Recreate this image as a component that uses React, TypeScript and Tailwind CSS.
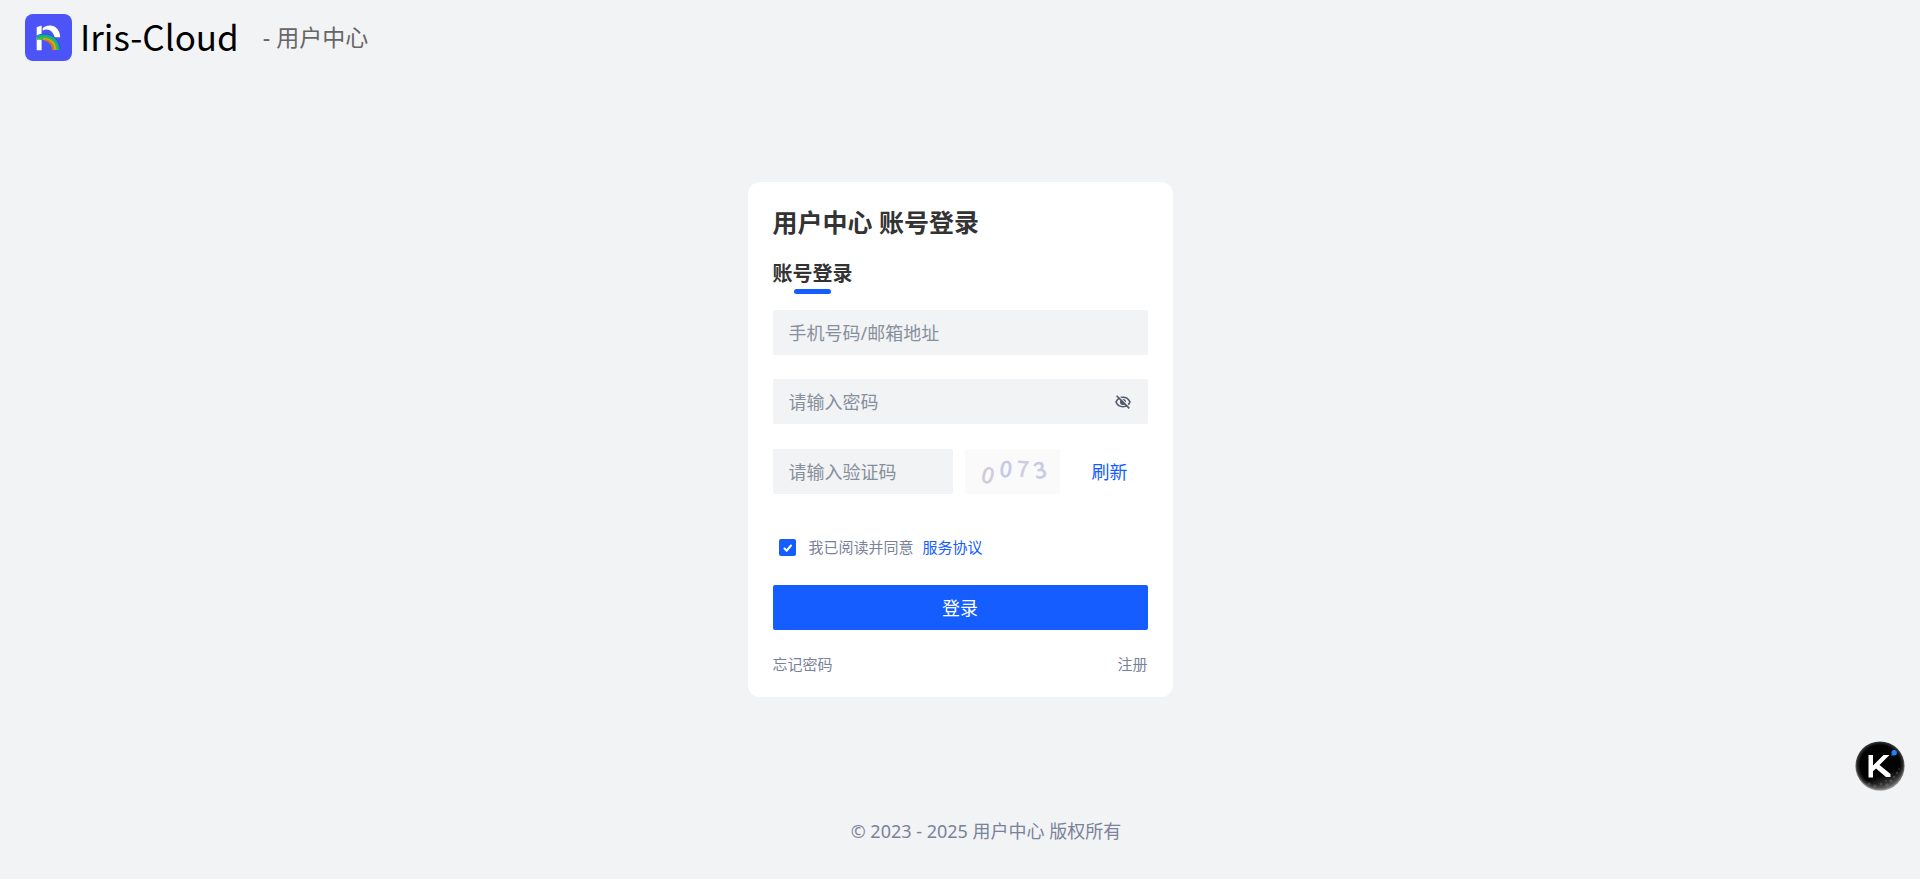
import { useState } from 'react';

function Logo() {
  return (
    <svg viewBox="0 0 47 47" className="size-[47px]" aria-hidden="true">
      <rect width="47" height="47" rx="8" fill="#4c54f7" />
      <path d="M11.7 13.2 L16.6 11.4 V36.2 H11.7 Z" fill="#fff" />
      <path d="M17.6 14.2 C20 12 23 11.3 26 11.6 C31 12.2 35 16.5 35.2 23.2 H29.6 C28.5 18.5 25.5 15.8 21.5 15.6 C20 15.6 18.8 16 17.6 16.6 Z" fill="#fff" />
      <path d="M11.6 22.6 C21 17.5 34 22 34.6 36 H27.2 C26.5 29 21.5 25 11.6 26 Z" fill="#43b05a" />
      <path d="M11.6 23.2 C21 18.5 33.2 23 33.8 36" fill="none" stroke="#12a7ae" strokeWidth="1.8" />
      <path d="M14.5 24.6 C22 22 31.3 26 32 36" fill="none" stroke="#3fbd3a" strokeWidth="1.8" />
      <path d="M18.5 25 C25.5 25.3 29.9 29 30.4 36" fill="none" stroke="#e0a51c" strokeWidth="1.8" />
      <path d="M20.5 26 C25.5 27.5 28 31 28.4 36" fill="none" stroke="#ee6a1c" strokeWidth="1.7" />
      <path d="M10.8 22.4 C21 16.5 34.5 21.5 35.4 36" fill="none" stroke="#1765c8" strokeWidth="1" />
    </svg>
  );
}

function HiddenEye() {
  return (
    <svg viewBox="0 0 16 16" className="size-4" fill="none" aria-hidden="true">
      <path d="M1 8 C3.8 1.7 12.2 1.7 15 8 C12.2 14.3 3.8 14.3 1 8 Z" stroke="#4e5969" strokeWidth="1.6" />
      <circle cx="8" cy="8" r="3" fill="#4e5969" />
      <path d="M2.6 1.1 L15 13.5" stroke="#f2f3f5" strokeWidth="1.2" />
      <path d="M1.6 1.7 L14.3 14.4" stroke="#4e5969" strokeWidth="1.6" />
    </svg>
  );
}

function Captcha() {
  return (
    <svg viewBox="0 0 95 45" className="h-[45px] w-[95px] shrink-0 bg-[#fafafa]" role="img" aria-label="验证码">
      <g fontFamily="'Noto Sans CJK SC', sans-serif" fontSize="22" fontWeight="400" textAnchor="middle" strokeWidth="0.6">
        <text transform="translate(23 26) rotate(15)" y="8" fill="#d0cbd9" stroke="#d0cbd9">0</text>
        <text transform="translate(41 20) rotate(8)" y="8" fill="#c3c8e6" stroke="#c3c8e6">0</text>
        <text transform="translate(58 20) rotate(4)" y="8" fill="#d0cbe4" stroke="#d0cbe4">7</text>
        <text transform="translate(75 21) rotate(-14)" y="8" fill="#c3cbe2" stroke="#c3cbe2">3</text>
      </g>
    </svg>
  );
}

function Assistant() {
  return (
    <button type="button" aria-label="助手" className="fixed right-[15px] bottom-[88px] size-[50px] cursor-pointer">
      <svg viewBox="0 0 50 50" className="size-full" aria-hidden="true">
        <defs>
          <radialGradient id="orb" cx="50%" cy="48%" r="52%">
            <stop offset="0.78" stopColor="#030303" />
            <stop offset="0.9" stopColor="#2e2e2e" />
            <stop offset="1" stopColor="#a0a0a0" />
          </radialGradient>
          <linearGradient id="dust" x1="0.35" y1="0.2" x2="0.65" y2="1">
            <stop offset="0.6" stopColor="#888" stopOpacity="0" />
            <stop offset="1" stopColor="#999" stopOpacity="0.6" />
          </linearGradient>
        </defs>
        <circle cx="25" cy="25" r="24.6" fill="url(#orb)" />
        <circle cx="25" cy="25" r="24.6" fill="url(#dust)" />
        <g fill="#a5a5a5" opacity="0.25">
          <circle cx="39" cy="36" r="1.3" />
          <circle cx="36" cy="40" r="1.8" />
          <circle cx="42" cy="32" r="1.2" />
          <circle cx="32" cy="44" r="1.8" />
          <circle cx="26" cy="43" r="1.4" />
          <circle cx="20" cy="45" r="1.6" />
          <circle cx="14" cy="43" r="1.4" />
          <circle cx="44" cy="28" r="0.9" />
          <circle cx="31" cy="40" r="0.9" />
        </g>
        <path d="M13.5 14 H18 V24.5 L28.5 14 H34.5 L24.5 24 L35.5 33 V36 H31 L21 27.5 L18 30.3 V36.5 H13.5 Z" fill="#fff" />
        <path d="M36.5 14.5 V12 A2.7 2.7 0 1 1 39.2 14.5 Z" fill="#1d82f5" />
      </svg>
    </button>
  );
}

const field =
  'h-[45px] rounded-xs bg-[#f2f3f5] px-4 text-lg text-[#1d2129] outline-none placeholder:text-[#86909c]';

export default function App() {
  const [agreed, setAgreed] = useState(true);
  const [visible, setVisible] = useState(false);

  return (
    <div className="flex min-h-screen flex-col bg-[#f2f3f5] font-['Noto_Sans','Noto_Sans_CJK_SC',sans-serif]">
      <header className="flex h-[76px] items-center pb-px pl-[25px]">
        <Logo />
        <span className="ml-2 pb-1 font-['Noto_Sans_CJK_SC',sans-serif] text-[35px] leading-none text-black">
          Iris-Cloud
        </span>
        <span className="ml-6 text-[23px] text-[#666]">- 用户中心</span>
      </header>

      <main className="flex flex-1 items-center justify-center">
        <form
          className="flex w-[425px] flex-col rounded-xl bg-white px-[25px] pt-[25px] pb-[21px]"
          onSubmit={(e) => e.preventDefault()}
        >
          <h1 className="text-[25px] leading-[30px] font-bold text-[#333]">用户中心 账号登录</h1>
          <h2 className="mt-[22px] text-xl leading-[30px] font-bold text-[#333]">账号登录</h2>
          <div className="ml-[21px] h-[5px] w-[37px] rounded-full bg-[#165dff]" />

          <input className={`mt-4 ${field}`} type="text" aria-label="手机号码/邮箱地址" placeholder="手机号码/邮箱地址" />

          <div className="mt-6 flex items-center rounded-xs bg-[#f2f3f5] pr-[17px]">
            <input
              className={`min-w-0 flex-1 ${field}`}
              type={visible ? 'text' : 'password'}
              aria-label="请输入密码"
              placeholder="请输入密码"
            />
            <button type="button" aria-label="显示密码" className="cursor-pointer" onClick={() => setVisible(!visible)}>
              <HiddenEye />
            </button>
          </div>

          <div className="mt-[25px] flex">
            <input className={`w-[180px] ${field}`} type="text" aria-label="请输入验证码" placeholder="请输入验证码" />
            <div className="ml-3 flex">
              <Captcha />
            </div>
            <button type="button" className="ml-3 flex-1 cursor-pointer text-lg text-[#165dff]">
              刷新
            </button>
          </div>

          <div className="mt-[41px] flex h-6 items-center pl-[6px] text-[15px]">
            <span className="relative flex size-[17px]">
              <input
                id="agree"
                type="checkbox"
                checked={agreed}
                onChange={(e) => setAgreed(e.target.checked)}
                className="peer size-full appearance-none rounded-xs border-2 border-[#e5e6eb] bg-white checked:border-[#165dff] checked:bg-[#165dff]"
              />
              <svg
                viewBox="0 0 17 17"
                className="pointer-events-none absolute inset-0 hidden size-full peer-checked:block"
                fill="none"
                stroke="#fff"
                strokeWidth="2"
                strokeLinecap="round"
                strokeLinejoin="round"
                aria-hidden="true"
              >
                <path d="M5.5 9.5 L7.7 11.7 L12 6.5" />
              </svg>
            </span>
            <label htmlFor="agree" className="ml-[13px] text-[#7a829a]">
              我已阅读并同意
            </label>
            <a href="#agreement" className="ml-[9px] text-[#165dff]">
              服务协议
            </a>
          </div>

          <button type="submit" className="mt-[26px] h-[45px] cursor-pointer rounded-xs bg-[#165dff] text-lg text-white">
            登录
          </button>

          <div className="mt-[22px] flex justify-between text-[15px] leading-6 text-[#7a829a]">
            <a href="#forgot">忘记密码</a>
            <a href="#register">注册</a>
          </div>
        </form>
      </main>

      <footer className="flex h-[76px] justify-center pt-4 pl-[52px] text-lg leading-6 text-[#7a829a]">
        © 2023 - 2025 用户中心 版权所有
      </footer>

      <Assistant />
    </div>
  );
}
